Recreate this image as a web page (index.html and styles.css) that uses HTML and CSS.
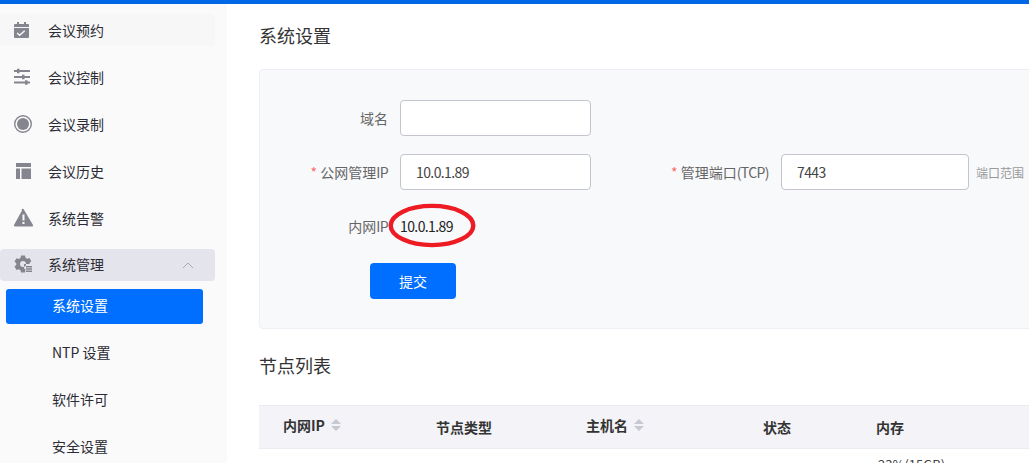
FILE: index.html
```html
<!DOCTYPE html>
<html lang="zh-CN">
  <head>
    <meta charset="UTF-8" />
    <title>系统设置</title>
    <link rel="stylesheet" href="styles.css">
  </head>
  <body>
    <div class="topbar"></div>
    <div class="layout">
      <div class="sidebar">
        <div class="nav-item hover">
          <svg class="nav-icon" viewBox="0 0 20 20"><path d="M4 2h2v2h5V2h2v2h2a1 1 0 0 1 1 1v2H1V5a1 1 0 0 1 1-1h2z"/><path fill-rule="evenodd" d="M1 8h15v9a1 1 0 0 1-1 1H2a1 1 0 0 1-1-1zm3.600 4.600-1 1 3 2.600 5.600-5-1-1-4.600 4z"/></svg>
          <span>会议预约</span>
        </div>
        <div class="nav-item">
          <svg class="nav-icon" viewBox="0 0 20 20"><path d="M1 3h3V1.800h2.500V3H17v2H6.500v1.200H4V5H1zM1 9h8V7.800h2.500V9H17v2h-5.500v1.200H9V11H1zM1 14.500h11v-1.200h2.500v1.200H17v2h-2.500v1.200H12v-1.200H1z"/></svg>
          <span>会议控制</span>
        </div>
        <div class="nav-item">
          <svg class="nav-icon" viewBox="0 0 20 20"><circle cx="10" cy="10" r="8.300" fill="none" stroke="#85858f" stroke-width="1.400"/><circle cx="10" cy="10" r="6"/></svg>
          <span>会议录制</span>
        </div>
        <div class="nav-item">
          <svg class="nav-icon" viewBox="0 0 20 20"><path d="M3 2h15v4H3zM3 7.500h4V18H3zM8.500 7.500H18V18H8.500z"/></svg>
          <span>会议历史</span>
        </div>
        <div class="nav-item">
          <svg class="nav-icon" viewBox="0 0 20 20"><path fill-rule="evenodd" d="M10.500 1 20 17a1 1 0 0 1-1 1.500H2A1 1 0 0 1 1 17L9 2.500a1 1 0 0 1 1.500-1.500zM9.500 6.500v6h2v-6zm0 7.500v2h2v-2z"/></svg>
          <span>系统告警</span>
        </div>
        <div class="nav-item open">
          <svg class="nav-icon" viewBox="0 0 20 20"><path fill-rule="evenodd" d="M8 1.500h4l.5 2.300 1.700 1 2.300-.8 1.800 3.200-1.700 1.600v1.200h-5.600v4.800h1.300V17l-.3 1.500H8l-.5-2.300-1.700-1-2.300.8-2-3.400 1.800-1.600V9.200L1.500 7.600l2-3.400 2.300.8 1.700-1zM10 7a3 3 0 1 0 0 6 3 3 0 0 0 0-6z"/><path d="M13 12h6v1.400h-6zM13 14.300h6v1.400h-6zM13 16.600h6V18h-6z"/></svg>
          <span>系统管理</span>
          <svg class="chevron" viewBox="0 0 12 7"><path d="M1 6l5-5 5 5" fill="none" stroke="#a9a9b2" stroke-width="1"/></svg>
        </div>
        <div class="sub-list">
          <div class="sub-item active">系统设置</div>
          <div class="sub-item">NTP 设置</div>
          <div class="sub-item">软件许可</div>
          <div class="sub-item">安全设置</div>
        </div>
      </div>
      <div class="main">
        <h2 class="title">系统设置</h2>
        <div class="card">
          <div class="form-row">
            <label class="label">域名</label>
            <div class="input"></div>
          </div>
          <div class="form-row">
            <label class="label"><i>*</i> 公网管理<span class="latin">IP</span></label>
            <div class="input latin">10.0.1.89</div>
            <label class="label label-port"><i>*</i> 管理端口<span class="latin">(TCP)</span></label>
            <div class="input input-port latin">7443</div>
            <span class="hint">端口范围</span>
          </div>
          <div class="form-row">
            <label class="label">内网<span class="latin">IP</span></label>
            <div class="plain-value latin">
              10.0.1.89
              <svg class="circle-mark" viewBox="0 0 88 45"><ellipse cx="44" cy="22.500" rx="41.300" ry="19.600" fill="none" stroke="#ed1c24" stroke-width="4.400"/></svg>
            </div>
          </div>
          <button class="submit">提交</button>
        </div>
        <h2 class="title title-list">节点列表</h2>
        <table class="nodes">
          <thead>
            <tr>
              <th class="c1"><span class="sort-head">内网IP<svg class="sort" viewBox="0 0 10 12"><path d="M5 0l5 5H0z"/><path d="M0 7h10l-5 5z"/></svg></span></th>
              <th class="c2">节点类型</th>
              <th class="c3"><span class="sort-head">主机名<svg class="sort" viewBox="0 0 10 12"><path d="M5 0l5 5H0z"/><path d="M0 7h10l-5 5z"/></svg></span></th>
              <th class="c4">状态</th>
              <th class="c5">内存</th>
            </tr>
          </thead>
          <tbody>
            <tr>
              <td></td>
              <td></td>
              <td></td>
              <td></td>
              <td class="mem">23%(15GB)</td>
            </tr>
          </tbody>
        </table>
      </div>
    </div>
  </body>
</html>
```

FILE: styles.css
```css
* {
  margin: 0;
  padding: 0;
  box-sizing: border-box;
}
html,
body {
  width: 100%;
  height: 100%;
  overflow: hidden;
  background: #fff;
  font-family: "Noto Sans CJK SC", "Noto Sans", sans-serif;
  font-size: 14px;
  color: #333;
}
.latin {
  letter-spacing: -0.6px;
}
.topbar {
  height: 4px;
  background: #0067e6;
}
.layout {
  display: flex;
  height: 459px;
}
.sidebar {
  width: 227px;
  flex: none;
  background: #fafafb;
  padding-top: 10px;
}
.nav-item {
  display: flex;
  align-items: center;
  width: 215px;
  height: 32px;
  margin-bottom: 15px;
  padding-left: 13px;
  border-radius: 0 4px 4px 0;
  color: #2b2b33;
}
.nav-item.hover {
  background: #f7f7f8;
}
.nav-item.open {
  background: #e4e4ec;
  margin-bottom: 8px;
  padding-bottom: 2px;
  border-radius: 4px;
}
.nav-icon {
  width: 20px;
  height: 20px;
  margin-right: 15px;
  fill: #85858f;
}
.chevron {
  width: 12px;
  height: 7px;
  margin-left: auto;
  margin-right: 21px;
  position: relative;
  top: 1px;
}
.sub-list {
  display: flex;
  flex-direction: column;
  gap: 12px;
  padding-left: 6px;
}
.sub-item {
  width: 197px;
  height: 35px;
  line-height: 33px;
  padding-left: 46px;
  border-radius: 3px;
  color: #2b2b33;
}
.sub-item.active {
  background: #006eff;
  color: #fff;
}
.main {
  flex: 1;
  min-width: 0;
  overflow: hidden;
  padding: 17px 0 0 32px;
}
.title {
  font-size: 18px;
  font-weight: 400;
  line-height: 28px;
  color: #333;
}
.card {
  width: 900px;
  height: 260px;
  margin-top: 20px;
  padding-top: 30px;
  background: #f8f9fb;
  border: 1px solid #eeeff5;
  border-radius: 4px;
}
.form-row {
  display: flex;
  align-items: center;
  height: 36px;
  margin-bottom: 18px;
}
.label {
  width: 128px;
  flex: none;
  text-align: right;
  color: #666;
  margin-right: 12px;
}
.label i {
  font-style: normal;
  color: #f56c6c;
}
.label-port {
  width: 133px;
  margin-left: 45px;
}
.input {
  width: 191px;
  height: 36px;
  line-height: 34px;
  padding-left: 15px;
  background: #fff;
  border: 1px solid #c4c4cc;
  border-radius: 4px;
  color: #444;
}
.input-port {
  width: 188px;
}
.hint {
  margin-left: 7px;
  font-size: 12px;
  color: #999;
}
.plain-value {
  position: relative;
  color: #222;
}
.circle-mark {
  position: absolute;
  left: -12px;
  top: -13px;
  width: 88px;
  height: 45px;
}
.submit {
  display: block;
  width: 86px;
  height: 36px;
  margin: 19px 0 0 110px;
  background: #006eff;
  border: none;
  border-radius: 4px;
  color: #fff;
  font-family: inherit;
  font-size: 14px;
}
.title-list {
  margin-top: 22px;
}
.nodes {
  width: 900px;
  margin-top: 26px;
  table-layout: fixed;
  border-collapse: collapse;
}
.nodes th {
  height: 43px;
  padding-left: 24px;
  text-align: left;
  background: #f3f3f8;
  border-top: 1px solid #ebebf2;
  border-bottom: 1px solid #ebebf2;
  font-size: 14px;
  font-weight: 700;
  color: #333;
}
.c1 {
  width: 153px;
}
.c2 {
  width: 150px;
}
.c3 {
  width: 177px;
}
.c4 {
  width: 113px;
}
.sort-head {
  display: inline-flex;
  align-items: center;
  position: relative;
  top: -2px;
}
.sort {
  width: 10px;
  height: 12px;
  margin-left: 6px;
  fill: #c6c8d2;
}
.nodes td {
  padding: 6px 0 0 24px;
  font-size: 13px;
  color: #444;
}
.nodes td.mem {
  padding-left: 26px;
}
```
